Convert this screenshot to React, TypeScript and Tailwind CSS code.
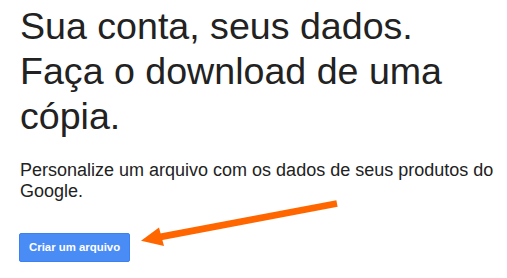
export default function App() {
  return (
    <div className="relative h-[278px] w-[507px] overflow-hidden bg-white font-['Liberation_Sans',Arial,sans-serif]">
      <main className="flex flex-col items-start pl-[20px] pt-[4px]">
        <h1 className="text-[37.6px] leading-[45px] font-normal text-[#222]">
          Sua conta, seus dados.
          <br />
          Faça o download de uma
          <br />
          cópia.
        </h1>
        <p className="mt-[21px] w-[480px] text-[18px] leading-[20.5px] text-[#222]">
          Personalize um arquivo com os dados de seus produtos do Google.
        </p>
        <button className="mt-[32px] ml-[-1px] h-[29px] rounded-[2px] border border-[#3b82f0] bg-[#4a8cf6] px-[9px] text-[11.4px] font-bold text-white">
          Criar um arquivo
        </button>
      </main>

      {/* annotation arrow */}
      <svg
        className="pointer-events-none absolute left-0 top-0"
        width="507"
        height="278"
        viewBox="0 0 507 278"
      >
        <line x1="337" y1="203.5" x2="158" y2="237.3" stroke="#ff6600" strokeWidth="6.8" />
        <polygon points="141,240.7 159,227.5 164,246" fill="#ff6600" />
      </svg>
    </div>
  );
}
